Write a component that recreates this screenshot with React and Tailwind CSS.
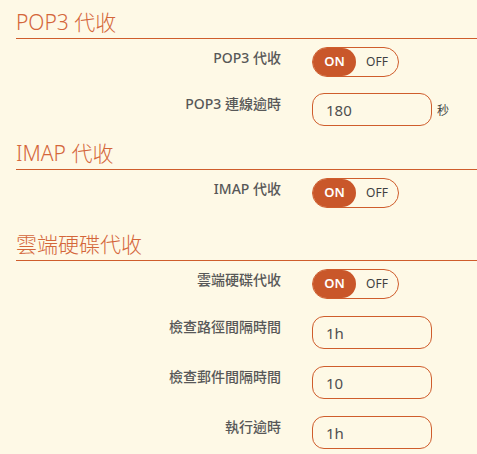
import React from 'react';

const font = { fontFamily: '"Noto Sans", "Noto Sans CJK TC", sans-serif' };

function SectionTitle({ children, className = '' }) {
  return (
    <h2
      className={`border-b border-[#cf5d2c] pb-[2px] text-[21px] leading-[28px] font-light text-[#d4663a] ${className}`}
    >
      {children}
    </h2>
  );
}

function Row({ label, children, className = '' }) {
  return (
    <div className={`flex items-start ${className}`}>
      <div className="w-[265px] pt-[1px] text-right text-[14px] leading-5 font-medium text-[#585858]">
        {label}
      </div>
      <div className="ml-[31px] flex items-center">{children}</div>
    </div>
  );
}

function Toggle({ on = true }) {
  return (
    <div className="flex h-[30px] w-[87px] items-center rounded-full border border-[#cf5d2c]">
      <div
        className={`flex h-full w-[43px] items-center justify-center rounded-full text-[13px] font-semibold ${
          on ? 'bg-[#c9572a] text-white' : 'text-[#444]'
        }`}
      >
        ON
      </div>
      <div className="flex flex-1 items-center justify-center text-[12px] text-[#3f3f3f]">
        OFF
      </div>
    </div>
  );
}

function TextBox({ value }) {
  return (
    <input
      readOnly
      value={value}
      className="h-[33px] w-[120px] rounded-[12px] border border-[#cf5d2c] bg-transparent pl-[13px] text-[15px] text-[#4f4f4f] outline-none"
    />
  );
}

export default function App() {
  return (
    <div className="min-h-screen overflow-hidden bg-[#fef9e6] pl-4" style={font}>
      <SectionTitle className="pt-2">POP3 代收</SectionTitle>
      <Row label="POP3 代收" className="mt-2">
        <Toggle />
      </Row>
      <Row label="POP3 連線逾時" className="mt-4">
        <TextBox value="180" />
        <span className="ml-[5px] mt-[3px] text-[12px] text-[#444]">秒</span>
      </Row>

      <SectionTitle className="mt-[13px]">IMAP 代收</SectionTitle>
      <Row label="IMAP 代收" className="mt-2">
        <Toggle />
      </Row>

      <SectionTitle className="mt-[22px]">雲端硬碟代收</SectionTitle>
      <Row label="雲端硬碟代收" className="mt-2">
        <Toggle />
      </Row>
      <Row label="檢查路徑間隔時間" className="mt-[17px]">
        <TextBox value="1h" />
      </Row>
      <Row label="檢查郵件間隔時間" className="mt-[17px]">
        <TextBox value="10" />
      </Row>
      <Row label="執行逾時" className="mt-[17px]">
        <TextBox value="1h" />
      </Row>
    </div>
  );
}
